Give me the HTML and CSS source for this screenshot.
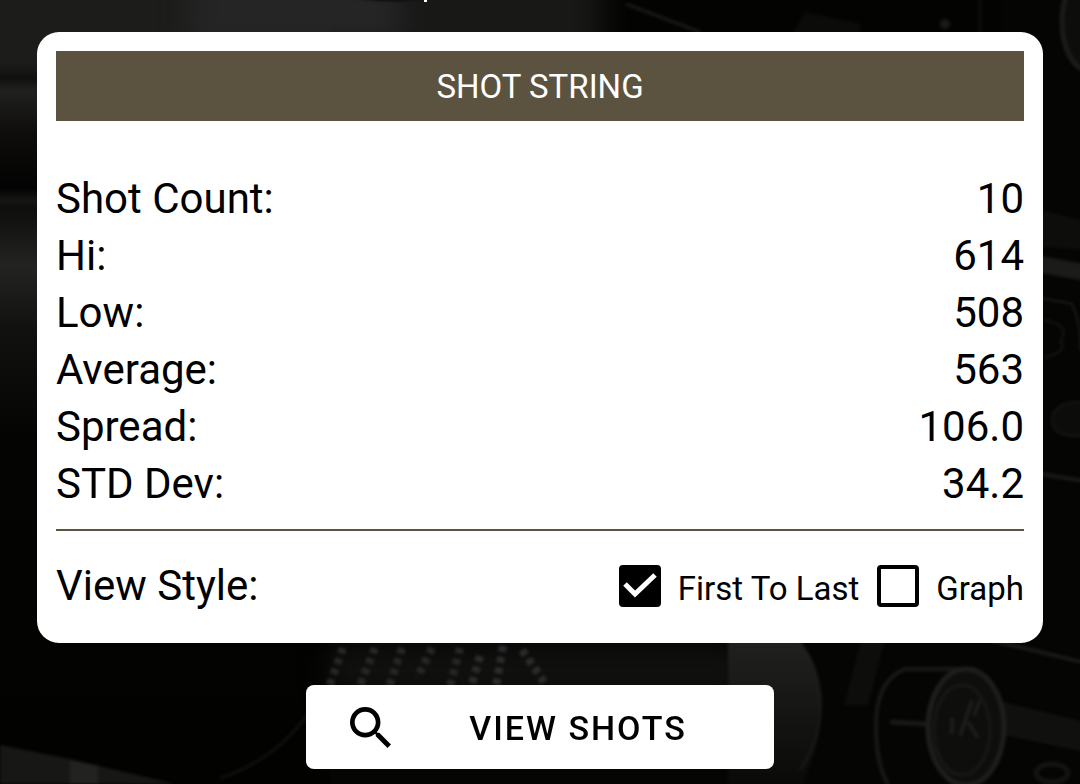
FILE: index.html
```html
<!DOCTYPE html>
<html lang="en">
<head>
    <meta charset="UTF-8">
    <meta name="viewport" content="width=device-width, initial-scale=1.0">
    <title>Shot String</title>
    <link rel="stylesheet" href="styles.css">
</head>
<body>

<!-- Dark workshop backdrop -->
<svg class="backdrop" viewBox="0 0 1080 784" preserveAspectRatio="xMidYMid slice" aria-hidden="true">
    <defs>
        <linearGradient id="barrel" x1="0" y1="0" x2="0" y2="1">
            <stop offset="0" stop-color="#1c1c1b"/>
            <stop offset="0.08" stop-color="#1c1c1a"/>
            <stop offset="0.1" stop-color="#10100e"/>
            <stop offset="0.115" stop-color="#20201f"/>
            <stop offset="0.17" stop-color="#0e0d0b"/>
            <stop offset="0.24" stop-color="#020202"/>
            <stop offset="0.255" stop-color="#161615"/>
            <stop offset="0.265" stop-color="#0e0e0d"/>
            <stop offset="0.34" stop-color="#232322"/>
            <stop offset="0.42" stop-color="#11110f"/>
            <stop offset="0.56" stop-color="#040403"/>
            <stop offset="1" stop-color="#020201"/>
        </linearGradient>
        <linearGradient id="tube" x1="0" y1="0" x2="0" y2="1">
            <stop offset="0" stop-color="#222221"/>
            <stop offset="1" stop-color="#080807"/>
        </linearGradient>
        <filter id="soft" color-interpolation-filters="sRGB"><feGaussianBlur stdDeviation="1.5"/></filter>
        <filter id="wide" x="-30%" y="-30%" width="160%" height="160%" color-interpolation-filters="sRGB"><feGaussianBlur stdDeviation="14"/></filter>
    </defs>
    <rect width="1080" height="784" fill="#050504"/>
    <rect width="330" height="784" fill="url(#barrel)"/>
    <g filter="url(#wide)">
        <path d="M190 -60H400V50H190z" fill="#252526"/>
        <path d="M400 -60H600V60H400z" fill="#181817"/>
        <path d="M330 650H740V690H330z" fill="#121211"/>
    </g>
    <g filter="url(#soft)">
        <path d="M626 -10H1000V50H626z" fill="#030302"/>
        <path d="M345 -10H460Q400 8 345 -4z" fill="#050504"/>
        <path d="M626 4L700 32" stroke="#191918" stroke-width="3"/>
        <path d="M805 12L860 24V40H790z" fill="#0b0b0a"/>
        <circle cx="945" cy="24" r="5" fill="#191918"/>
        <path d="M980 0V34" stroke="#10100f" stroke-width="3"/>
        <ellipse cx="1088" cy="22" rx="26" ry="48" fill="#0d0d0c" stroke="#1b1b1a" stroke-width="5"/>
        <path d="M1030 207L1090 222V250L1030 246z" fill="#0d0d0c"/>
        <path d="M1030 254L1090 265V282L1030 271z" fill="#1b1b1a"/>
        <path d="M1030 296L1072 304Q1082 325 1080 350" fill="none" stroke="#1b1b1a" stroke-width="2"/>
        <path d="M1044 320Q1072 325 1060 342Q1070 350 1044 358" fill="none" stroke="#161615" stroke-width="2"/>
        <path d="M1090 402Q1052 400 1052 420T1090 435" fill="#0c0c0b" stroke="#171716" stroke-width="2"/>
        <path d="M990 640L1090 664M1030 472L1090 482" stroke="#1a1a19" stroke-width="4"/>
        <path d="M1003 703L1090 724V752L1003 734z" fill="#10100f" stroke="#171716"/>
        <path d="M0 745L70 759L175 784H0z" fill="#171716"/>
        <path d="M70 760L98 766V784H70z" fill="#222221"/>
        <path d="M220 778Q280 758 310 710" fill="none" stroke="#10100f" stroke-width="3"/>
        <path d="M728 630H790Q822 660 822 706Q820 750 798 794H728z" fill="url(#tube)"/>
        <path d="M810 668Q835 716 800 770" fill="none" stroke="#1c1c1b" stroke-width="2"/>
        <path d="M861 640L844 705H868L885 640z" fill="#0d0d0c"/>
        <path d="M975 669H905Q876 680 876 726Q876 765 888 784" fill="none" stroke="#191918" stroke-width="4"/>
        <path d="M890 722L926 724" stroke="#191918" stroke-width="5"/>
        <ellipse cx="966" cy="727" rx="38" ry="58" fill="#0e0e0d" stroke="#1e1e1d" stroke-width="5"/>
        <ellipse cx="962" cy="730" rx="28" ry="45" fill="none" stroke="#181817" stroke-width="3"/>
        <path d="M972 700L960 736M968 722L978 738M952 718V734M980 700L974 716" stroke="#20201f" stroke-width="3"/>
        <ellipse cx="1052" cy="773" rx="16" ry="9" fill="none" stroke="#141413" stroke-width="5"/>
    </g>
    <!-- Worn engraving on the lens ring -->
    <g fill="none" stroke="#272726" stroke-width="8" stroke-dasharray="6 5" filter="url(#soft)">
        <path d="M343 648L328 690M375 648L358 690M402 648L388 690M432 648L417 678M460 648L449 690"/>
        <path d="M480 656L472 684M503 646L496 686M522 650L544 682" stroke="#2c2c2b"/>
    </g>
    <path d="M424 0H427V2H424z" fill="#fff"/>
</svg>

<main class="page">
    <section class="card">
        <h1>SHOT STRING</h1>

        <dl class="stats">
            <div class="stat-row"><dt>Shot Count:</dt><dd>10</dd></div>
            <div class="stat-row"><dt>Hi:</dt><dd>614</dd></div>
            <div class="stat-row"><dt>Low:</dt><dd>508</dd></div>
            <div class="stat-row"><dt>Average:</dt><dd>563</dd></div>
            <div class="stat-row"><dt>Spread:</dt><dd>106.0</dd></div>
            <div class="stat-row"><dt>STD Dev:</dt><dd>34.2</dd></div>
        </dl>

        <div class="view-style" role="group" aria-labelledby="view-style-label">
            <span id="view-style-label">View Style:</span>
            <div class="options">
                <label class="option" for="first-to-last">
                    <span class="check">
                        <input type="checkbox" id="first-to-last" checked>
                        <svg viewBox="0 0 42 42" aria-hidden="true"><path d="M6 19L16 29L36 10" fill="none" stroke="#fff" stroke-width="5"/></svg>
                    </span>
                    <span class="option-text">First To Last</span>
                </label>
                <label class="option" for="graph">
                    <span class="check">
                        <input type="checkbox" id="graph">
                        <svg viewBox="0 0 42 42" aria-hidden="true"><path d="M6 19L16 29L36 10" fill="none" stroke="#fff" stroke-width="5"/></svg>
                    </span>
                    <span class="option-text">Graph</span>
                </label>
            </div>
        </div>
    </section>

    <button type="button" class="view-shots">
        <svg class="search-icon" viewBox="3 3 17.5 17.5" aria-hidden="true">
            <path d="M15.5 14h-.79l-.28-.27A6.471 6.471 0 0 0 16 9.500 6.500 6.500 0 1 0 9.500 16c1.610 0 3.090-.59 4.230-1.570l.27.28v.79l5 4.990L20.490 19l-4.990-5zm-6 0C7.010 14 5 11.990 5 9.500S7.010 5 9.500 5 14 7.010 14 9.500 11.990 14 9.500 14z"/>
        </svg>
        <span>VIEW SHOTS</span>
    </button>
</main>

</body>
</html>
```

FILE: styles.css
```css
* {
    box-sizing: border-box;
}
body {
    font-family: Roboto, "Liberation Sans", sans-serif;
    margin: 0;
    background-color: #050504;
    color: #000;
}
.backdrop {
    position: fixed;
    top: 0;
    left: 0;
    width: 100%;
    height: 100%;
    z-index: -1;
}
.page {
    display: flex;
    flex-direction: column;
    align-items: center;
    gap: 42px;
    padding: 32px 37px 15px;
}
.card {
    width: 100%;
    padding: 19px;
    background-color: #fff;
    border-radius: 22px;
}
h1 {
    margin: 0;
    padding: 2px 0 0;
    background-color: #5b523f;
    color: #fff;
    font-size: 33px;
    font-weight: 400;
    line-height: 68px;
    text-align: center;
}
.stats {
    margin: 0;
    padding: 49px 0 17px;
    border-bottom: 2px solid #5b523f;
    font-size: 42px;
    line-height: 57px;
}
.stat-row {
    display: flex;
    justify-content: space-between;
}
dd {
    margin: 0;
}
.view-style {
    display: flex;
    justify-content: space-between;
    align-items: center;
    padding: 26px 0 10px;
    font-size: 42px;
    line-height: 57px;
}
.options {
    display: flex;
    gap: 18px;
}
.option {
    display: flex;
    align-items: center;
    gap: 17px;
    font-size: 33px;
    line-height: 51px;
}
.option-text {
    padding-top: 6px;
}
.check {
    position: relative;
    width: 42px;
    height: 42px;
}
.check input {
    appearance: none;
    display: block;
    width: 42px;
    height: 42px;
    margin: 0;
    border: 4px solid #000;
    border-radius: 4px;
}
.check input:checked {
    background-color: #000;
}
.check svg {
    display: none;
    position: absolute;
    top: 0;
    left: 0;
    width: 42px;
    height: 42px;
    pointer-events: none;
}
.check input:checked + svg {
    display: block;
}
.view-shots {
    display: flex;
    align-items: center;
    width: 468px;
    max-width: 100%;
    height: 84px;
    padding: 0 44px;
    border: 0;
    border-radius: 8px;
    background-color: #fff;
    color: #000;
    font-family: inherit;
    font-size: 34px;
    font-weight: 500;
    letter-spacing: 2px;
}
.view-shots span {
    flex: 1;
    padding: 2px 0 0 35px;
    text-align: center;
}
.search-icon {
    width: 41px;
    height: 41px;
}
```
